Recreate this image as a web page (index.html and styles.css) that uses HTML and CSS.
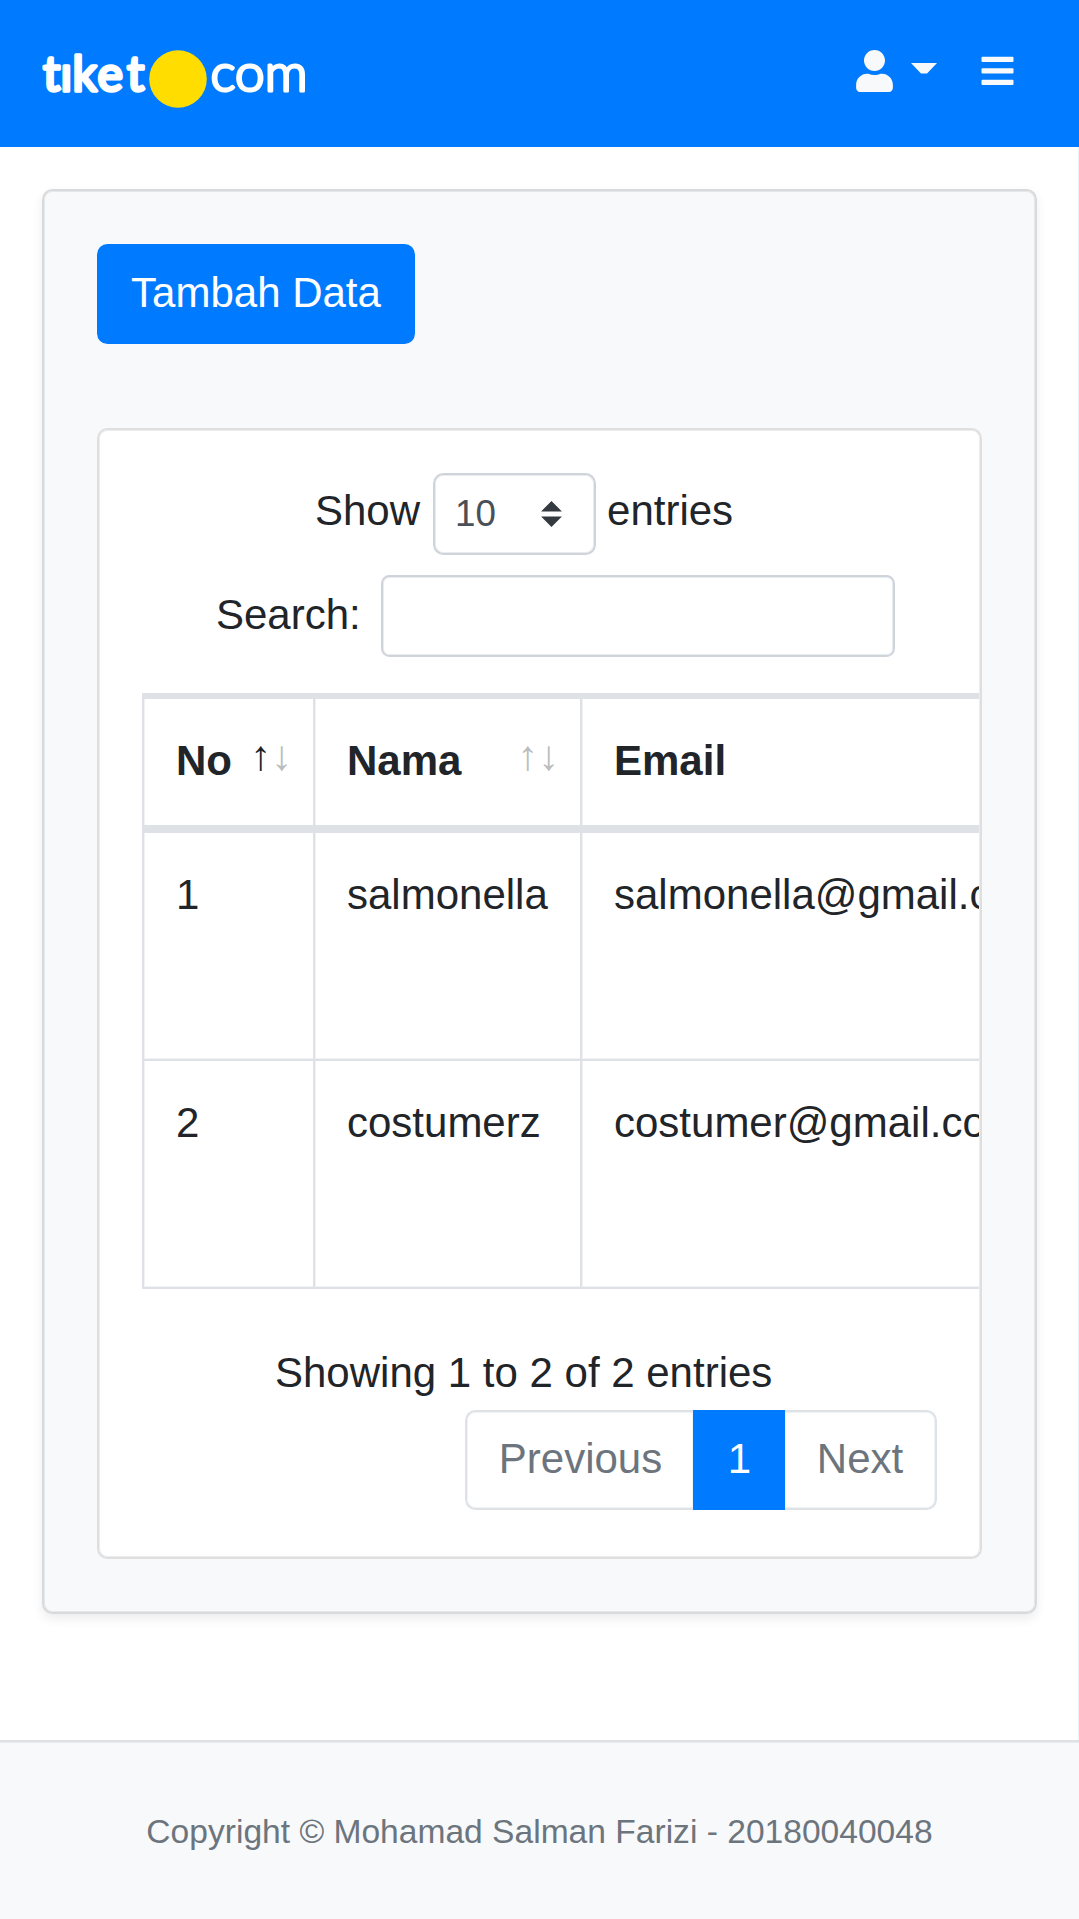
FILE: index.html
```html
<!DOCTYPE html>
<html lang="id">
<head>
<meta charset="utf-8">
<title>tiket.com</title>
<link rel="stylesheet" href="styles.css">
</head>
<body>
<header class="navbar">
  <svg class="logo" width="270" height="60" viewBox="0 0 270 60" role="img" aria-label="tiket.com">
    <text class="logo-bold" x="1 18.5 30.5 55.5 85" y="40.5">tıket</text>
    <circle cx="136" cy="29" r="28.8" fill="#ffdd00"/>
    <text class="logo-light" x="168.5" y="41" textLength="97" lengthAdjust="spacingAndGlyphs">com</text>
  </svg>
  <nav class="nav-actions">
    <svg class="icon-user" viewBox="0 0 448 512"><path d="M224 256c70.7 0 128-57.3 128-128S294.7 0 224 0 96 57.3 96 128s57.3 128 128 128zm89.6 32h-16.7c-22.2 10.2-46.9 16-72.9 16s-50.6-5.8-72.9-16h-16.7C60.2 288 0 348.2 0 422.4V464c0 26.5 21.5 48 48 48h352c26.5 0 48-21.5 48-48v-41.6c0-74.2-60.2-134.4-134.4-134.4z"/></svg>
    <svg class="icon-caret" viewBox="0 0 26 11"><path d="M0 0h26L16 10.5h-6z"/></svg>
    <svg class="icon-bars" viewBox="0 0 33 30"><rect x=".5" y=".8" width="32" height="5.2" rx="1"/><rect x=".5" y="12.2" width="32" height="5.2" rx="1"/><rect x=".5" y="23.7" width="32" height="5.2" rx="1"/></svg>
  </nav>
</header>

<main class="page">
  <section class="card">
    <a class="btn">Tambah Data</a>
    <div class="panel">
      <div class="length-row">
        <span class="length-label">Show</span>
        <span class="select">10
          <svg class="select-arrows" viewBox="0 0 4 5"><path fill="#343a40" d="M2 0L0 2h4zm0 5L0 3h4z"/></svg>
        </span>
        <span>entries</span>
      </div>
      <label class="search-row"><span class="search-label">Search:</span><input class="search" type="text"></label>
      <div class="table-wrap">
        <table class="table">
          <colgroup><col class="col-no"><col class="col-name"><col class="col-email"></colgroup>
          <thead>
            <tr>
              <th>No<span class="sort"><i class="on">↑</i><i>↓</i></span></th>
              <th>Nama<span class="sort"><i>↑</i><i>↓</i></span></th>
              <th>Email</th>
            </tr>
          </thead>
          <tbody>
            <tr><td>1</td><td>salmonella</td><td>salmonella@gmail.com</td></tr>
            <tr><td>2</td><td>costumerz</td><td>costumer@gmail.com</td></tr>
          </tbody>
        </table>
      </div>
      <div class="info">Showing 1 to 2 of 2 entries</div>
      <div class="pagination">
        <span class="page-link prev">Previous</span>
        <span class="page-link active">1</span>
        <span class="page-link next">Next</span>
      </div>
    </div>
  </section>
</main>

<footer class="footer">Copyright © Mohamad Salman Farizi - 20180040048</footer>
</body>
</html>
```
FILE: styles.css
```css
* { box-sizing: border-box; }

body {
  margin: 0;
  height: 1919px;
  display: flex;
  flex-direction: column;
  overflow: hidden;
  background: #fff;
  color: #212529;
  font: 42px/63px "Liberation Sans", Arial, sans-serif;
}

/* Top bar */
.navbar {
  height: 147px;
  flex: none;
  display: flex;
  justify-content: space-between;
  align-items: flex-start;
  padding: 50px 65px 0 42px;
  background: #007bff;
}
.logo { overflow: visible; }
.logo-bold, .logo-light {
  font-family: Lato, "Open Sans", sans-serif;
  fill: #fff;
  stroke: #fff;
  stroke-linejoin: round;
}
.logo-bold { font-size: 48px; font-weight: 400; stroke-width: 3.4px; }
.logo-light { font-size: 51px; font-weight: 300; stroke-width: 3px; }
.nav-actions { display: flex; align-items: flex-start; fill: #f8f9fa; }
.icon-user { width: 37px; height: 42px; margin-right: 18px; }
.icon-caret { width: 26px; height: 11px; margin: 13px 44px 0 0; }
.icon-bars { width: 33px; height: 30px; margin-top: 6px; }

/* Content */
.page {
  flex: none;
  height: 1593px;
  padding: 42px 41px 0 42px;
  border-right: 1px solid #e6f5f6;
}
.card {
  height: 1425px;
  padding: 53px;
  border: 2px solid #d9dadb;
  border-radius: 10.5px;
  background: #f8f9fa;
  box-shadow: inset 0 0 0 1px #e6e7e8, 0 5px 10.5px rgba(0, 0, 0, .075);
}
.btn {
  display: block;
  width: 318px;
  height: 100px;
  padding-top: 17px;
  border-radius: 10.5px;
  background: #007bff;
  color: #fff;
  text-align: center;
}
.panel {
  height: 1131px;
  margin-top: 84px;
  padding: 43px 43px 0;
  border: 2px solid #dfdfdf;
  border-radius: 10.5px;
  background: #fff;
  box-shadow: inset 0 0 0 1px #ececec;
}

/* Table controls */
.length-row {
  display: flex;
  gap: 11px;
  height: 82px;
  padding-left: 173px;
  line-height: 75px;
}
.length-label { margin-right: 2px; }
.select {
  display: flex;
  justify-content: space-between;
  width: 163px;
  height: 82px;
  padding: 0 32px 0 20px;
  border: 2px solid #ced4da;
  border-radius: 10.5px;
  box-shadow: inset 0 0 0 1px #e9ecef;
  color: #495057;
  font-size: 36.75px;
  line-height: 78px;
}
.select-arrows { width: 21px; height: 26px; margin-top: 26px; }
.search-row {
  display: flex;
  height: 82px;
  margin-top: 20px;
  padding-left: 74px;
  line-height: 79px;
}
.search-label { width: 165px; }
.search {
  width: 514px;
  height: 82px;
  border: 2px solid #ced4da;
  border-radius: 8.4px;
  box-shadow: inset 0 0 0 1px #e9ecef;
  background: #fff;
}

/* Data table */
.table-wrap { margin: 36px -42px 0 0; overflow: hidden; }
.table {
  width: 900px;
  table-layout: fixed;
  border-collapse: separate;
  border-spacing: 0;
}
.col-no { width: 171px; }
.col-name { width: 267px; }
.table th, .table td {
  padding: 30px 0 0 32px;
  border-left: 2px solid #dee2e6;
  text-align: left;
  vertical-align: top;
}
.table th {
  position: relative;
  height: 140px;
  border-top: 6px solid #dee2e6;
  border-bottom: 8px solid #dee2e6;
  box-shadow: inset 1px 0 #f0f2f4;
}
.table td {
  height: 228px;
  border-bottom: 2px solid #dee2e6;
  box-shadow: inset 1px -1px #f0f2f4;
}
.sort {
  position: absolute;
  right: 21px;
  top: 25px;
  display: flex;
}
.sort i { width: 21px; font-style: normal; opacity: .3; }
.sort .on { opacity: 1; }

.info { margin-top: 52px; padding-left: 133px; }
.pagination { display: flex; justify-content: flex-end; margin-top: 6px; }
.page-link {
  height: 100px;
  padding-top: 15px;
  border: 2px solid #dee2e6;
  box-shadow: inset 0 0 0 1px #f0f2f4;
  color: #6c757d;
  text-align: center;
}
.prev { width: 228px; padding-left: 1px; border-right: 0; border-radius: 10.5px 0 0 10.5px; }
.active { width: 92px; padding-left: 1px; border-color: #007bff; background: #007bff; box-shadow: none; color: #fff; }
.next { width: 152px; border-left: 0; border-radius: 0 10.5px 10.5px 0; }

.footer {
  flex: 1;
  padding-top: 65px;
  border-top: 2px solid #dee2e6;
  background: #f8f9fa;
  box-shadow: inset 0 1px #e9ecef;
  color: #6c757d;
  font-size: 33.6px;
  line-height: 50px;
  text-align: center;
}
```
